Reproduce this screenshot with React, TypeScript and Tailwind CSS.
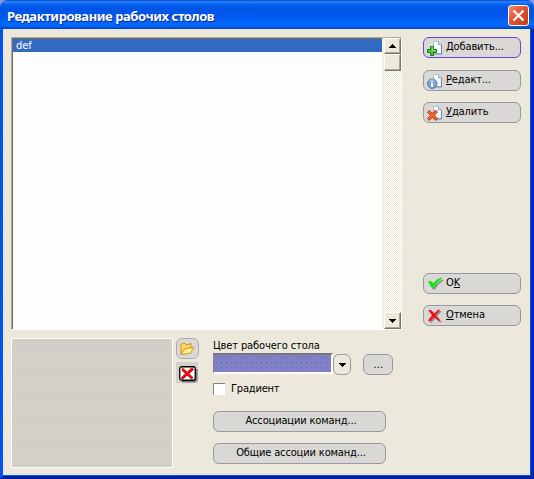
import type { ReactNode } from 'react';

const dots =
  'bg-[radial-gradient(circle,#eeddcf_0.5px,transparent_0.9px),radial-gradient(circle,#e4e2d4_0.5px,transparent_0.9px)] bg-[size:8px_10px] bg-[position:0_0,4px_5px]';
const greyDots =
  'bg-[radial-gradient(circle,#dfc6c0_0.5px,transparent_0.9px),radial-gradient(circle,#c3c5c8_0.5px,transparent_0.9px)] bg-[size:6px_6px] bg-[position:0_0,3px_3px]';

interface PushProps {
  className?: string;
  border?: string;
  fill?: string;
  children?: ReactNode;
}

function Push({ className = '', border = 'border-[#9699a3]', fill = 'bg-[#dad8d5]', children }: PushProps) {
  return (
    <button className={`flex h-[21px] shrink-0 items-center rounded-[6px] border tracking-[-0.14px] ${border} ${fill} ${className}`}>
      {children}
    </button>
  );
}

function Page() {
  return (
    <>
      <path d="M6.500 13.500V1.500h5l3 3v9z" fill="#f7faff" stroke="#b3c1d6" />
      <path d="M14.500 5v9H7" fill="none" stroke="#7086a6" />
      <path d="M11.500 1.500v3h3" fill="#dbe6f3" stroke="#91a3bf" />
    </>
  );
}

function AddIcon() {
  return (
    <svg width="16" height="16" viewBox="0 0 16 16">
      <Page />
      <path d="M3.500 6.500h3v3h3v3h-3v3h-3v-3h-3v-3h3z" fill="#48c838" stroke="#167c16" />
      <path d="M4.500 7.500h1v3h3" fill="none" stroke="#8de878" />
    </svg>
  );
}

function EditIcon() {
  return (
    <svg width="16" height="16" viewBox="0 0 16 16">
      <Page />
      <circle cx="5.300" cy="10.700" r="4.700" fill="#7fa6d2" stroke="#466fa5" />
      <path d="M2.300 8.500a3.500 3.500 0 0 1 6 0" fill="none" stroke="#bad4ef" />
      <path d="M4 8h2v1H4zM4 10h2v4H4z" fill="#fff" />
    </svg>
  );
}

function DeleteIcon() {
  return (
    <svg width="16" height="16" viewBox="0 0 16 16">
      <Page />
      <path d="M2 5.500l3.300 2.800L8.500 5l2 2-3 3.200 3.200 3.300-2 2L5.300 12.500l-3.200 3-1.600-2 3-3.100L.5 7.500z" fill="#ee642b" stroke="#ad3b12" strokeWidth=".9" />
    </svg>
  );
}

function OkIcon() {
  return (
    <svg width="16" height="14" viewBox="0 0 16 14">
      <path d="M1 5.500l3-1 2 3.200L11 3l4-1.400v1L10.500 6 6.500 11.500H4.500z" fill="#8d908d" transform="translate(.4 1)" />
      <path d="M0 4.500l3-.7L5 6.500 9.500 2 14 .5v1L9.500 5 5.500 10.500H3.500z" fill="#08ee08" />
    </svg>
  );
}

function CancelIcon() {
  return (
    <svg width="15" height="14" viewBox="0 0 15 14">
      <path d="M1 1.500h3L7 5l4-4 2 .5-4.500 5.200L13 12l-1 1-5-4.300L3 13l-2-1 4-5.300z" fill="#8d8d8d" transform="translate(.5 .8)" />
      <path d="M0 1h3L6 4.500 10.500 .5l1.500.5L7.500 6.300 12 11l-1 1.300L6 8l-4 4.500L0 11.500l4-5.200z" fill="#f50c12" />
    </svg>
  );
}

function FolderIcon() {
  return (
    <svg width="15" height="14" viewBox="0 0 15 14">
      <path d="M1 12V2.500L2.500 1l3 .5L6.500 3 11 1.500V6" fill="#ffd95c" stroke="#cf9620" />
      <path d="M1 12.500L4.500 7l4-1 5.500-.5-3.500 5.500-4.500 1z" fill="#fff08c" stroke="#cf9620" />
    </svg>
  );
}

function ClearIcon() {
  return (
    <svg width="19" height="17" viewBox="0 0 19 17">
      <path d="M3 15.500h12.500L17.500 14V3" fill="none" stroke="#777" strokeWidth="2" />
      <rect x=".75" y=".75" width="15.500" height="13.500" rx="2" fill="#fff" stroke="#000" strokeWidth="1.300" />
      <path d="M3.500 3.500l10 9M14 2.500l-11 10" stroke="#900" strokeWidth="2.600" />
      <path d="M3 2.500l10 9.500M13.500 2l-11 10.500" stroke="#f50c14" strokeWidth="2" />
    </svg>
  );
}

function Arrow({ up = false }: { up?: boolean }) {
  return (
    <svg width="7" height="4" viewBox="0 0 7 4" shapeRendering="crispEdges">
      <path d={up ? 'M3 0h1v1h1v1h1v1h1v1H0V3h1V2h1V1h1z' : 'M0 0h7v1H6v1H5v1H4v1H3V3H2V2H1V1H0z'} />
    </svg>
  );
}

const scrollButton =
  'flex shrink-0 items-center justify-center border border-t-white border-l-white border-r-[#77746b] border-b-[#77746b] bg-[#ece9d8] shadow-[inset_-1px_-1px_#aca899]';

export default function App() {
  return (
    <div className="flex h-[479px] w-[534px] flex-col overflow-hidden bg-[#8f9bd8] font-['DejaVu_Sans_Condensed','Liberation_Sans',sans-serif] text-[11px] leading-[13px] tracking-[-0.12px] text-black">
      <header className="flex h-[29px] shrink-0 items-center justify-between rounded-t-[7px] bg-[linear-gradient(to_bottom,#0846c8_0,#2b86ff_2px,#0864f2_4px,#0055e5_8px,#0057ea_16px,#0269ff_24px,#0262f5_26px,#0040bd_29px)] pr-[5px] pl-[7px]">
        <h1 className="mt-[3px] font-['Noto_Sans','Open_Sans',sans-serif] text-[13px] leading-[16px] font-bold tracking-[-0.45px] whitespace-nowrap text-white [text-shadow:1px_1px_#0a2a8c]">
          Редактирование рабочих столов
        </h1>
        <button className="mt-[2px] flex h-[21px] w-[21px] items-center justify-center rounded-[3px] border border-white bg-[linear-gradient(135deg,#ef8d70,#e35432_45%,#c63a12)]">
          <svg width="13" height="13" viewBox="0 0 13 13">
            <path d="M1.500 1.500l10 10M11.500 1.500l-10 10" stroke="#fff" strokeWidth="2.200" />
          </svg>
        </button>
      </header>
      <main className={`flex flex-1 flex-col border-r-[3px] border-b-[3px] border-l-[3px] border-l-[#0453ee] border-r-[#0025b0] border-b-[#001ea0] bg-[#ece9dc] shadow-[inset_0_-1px_#0453ee,inset_-1px_0_#0453ee] ${dots}`}>
        <section className="mt-[8px] ml-[8px] flex h-[293px]">
          <div className="flex w-[391px] border border-t-[#aca899] border-l-[#aca899] border-r-white border-b-white bg-[#fdfefb]">
            <div className="flex-1 border-t border-l border-t-[#716f64] border-l-[#716f64]">
              <div className="flex h-[13px] items-center bg-[#316ac5] bg-[radial-gradient(circle,#4169b4_0.5px,transparent_0.9px)] bg-[size:6px_5px] pl-[3px] text-white">
                <span>def</span>
              </div>
            </div>
            <div className="flex w-[19px] flex-col border-l-2 border-l-[#f4efe4] bg-[conic-gradient(#fff_25%,#ece9d8_0_50%,#fff_0_75%,#ece9d8_0)] bg-[size:2px_2px]">
              <div className={`h-[16px] ${scrollButton}`}><Arrow up /></div>
              <div className={`h-[17px] ${scrollButton}`} />
              <div className={`mt-auto h-[17px] ${scrollButton}`}><Arrow /></div>
            </div>
          </div>
          <nav className="ml-[21px] flex w-[98px] flex-col">
            <Push border="border-[#6840e8]" className="pl-[3px]"><AddIcon /><span className="mb-[3px] ml-[3px]"><u>Д</u>обавить...</span></Push>
            <Push className="mt-[12px] pl-[3px]"><EditIcon /><span className="mb-[3px] ml-[3px]"><u>Р</u>едакт...</span></Push>
            <Push className="mt-[11px] pl-[3px]"><DeleteIcon /><span className="mb-[3px] ml-[3px]"><u>У</u>далить</span></Push>
            <Push className="mt-auto pl-[4px]"><OkIcon /><span className="mb-[3px] ml-[2px]">O<u>K</u></span></Push>
            <Push className="mt-[11px] mb-[4px] pl-[4px]"><CancelIcon /><span className="mb-[3px] ml-[3px]"><u>О</u>тмена</span></Push>
          </nav>
        </section>
        <section className="mt-[8px] ml-[8px] flex">
          <div className={`h-[130px] w-[162px] border border-[#fffffa] bg-[#d3d0ca] ${greyDots}`} />
          <div className="ml-[3px] flex w-[24px] flex-col">
            <Push border="border-[#aaabad]" className="w-[23px] justify-center"><FolderIcon /></Push>
            <div className="mt-[3px] flex h-[21px] w-[22px] items-center justify-center bg-[#d3d0ca] pt-[3px] pl-[3px]"><ClearIcon /></div>
          </div>
          <div className="ml-[13px] flex flex-col">
            <label className="mt-px h-[14px] whitespace-nowrap">Цвет рабочего стола</label>
            <div className="flex h-[22px]">
              <div className="h-[21px] w-[120px] border-t-2 border-r-2 border-b-2 border-l border-t-[#77767a] border-l-[#85848a] border-r-white border-b-white bg-[#8080c8] bg-[radial-gradient(circle,#6665a2_0.5px,transparent_0.9px),radial-gradient(circle,#8583b4_0.5px,transparent_0.9px)] bg-[size:5px_5px] bg-[position:0_0,3px_3px]" />
              <Push fill="bg-[#ece9dc]" className="mt-px w-[18px] justify-center"><Arrow /></Push>
              <Push className="mt-px ml-[12px] w-[30px] justify-center pl-px"><span className="tracking-[0.2px]">...</span></Push>
            </div>
            <div className="mt-[7px] flex h-[13px] items-center">
              <span className="h-[12px] w-[12px] border-t border-l border-t-[#88857c] border-l-[#88857c] bg-white" />
              <span className="mb-px ml-[6px] tracking-[-0.2px]">Градиент</span>
            </div>
            <Push className="mt-[16px] w-[173px] justify-center pb-[2px] pl-[3px]">Ассоциации команд...</Push>
            <Push className="mt-[11px] w-[173px] justify-center pb-[2px] pl-[3px]">Общие ассоции команд...</Push>
          </div>
        </section>
      </main>
    </div>
  );
}
